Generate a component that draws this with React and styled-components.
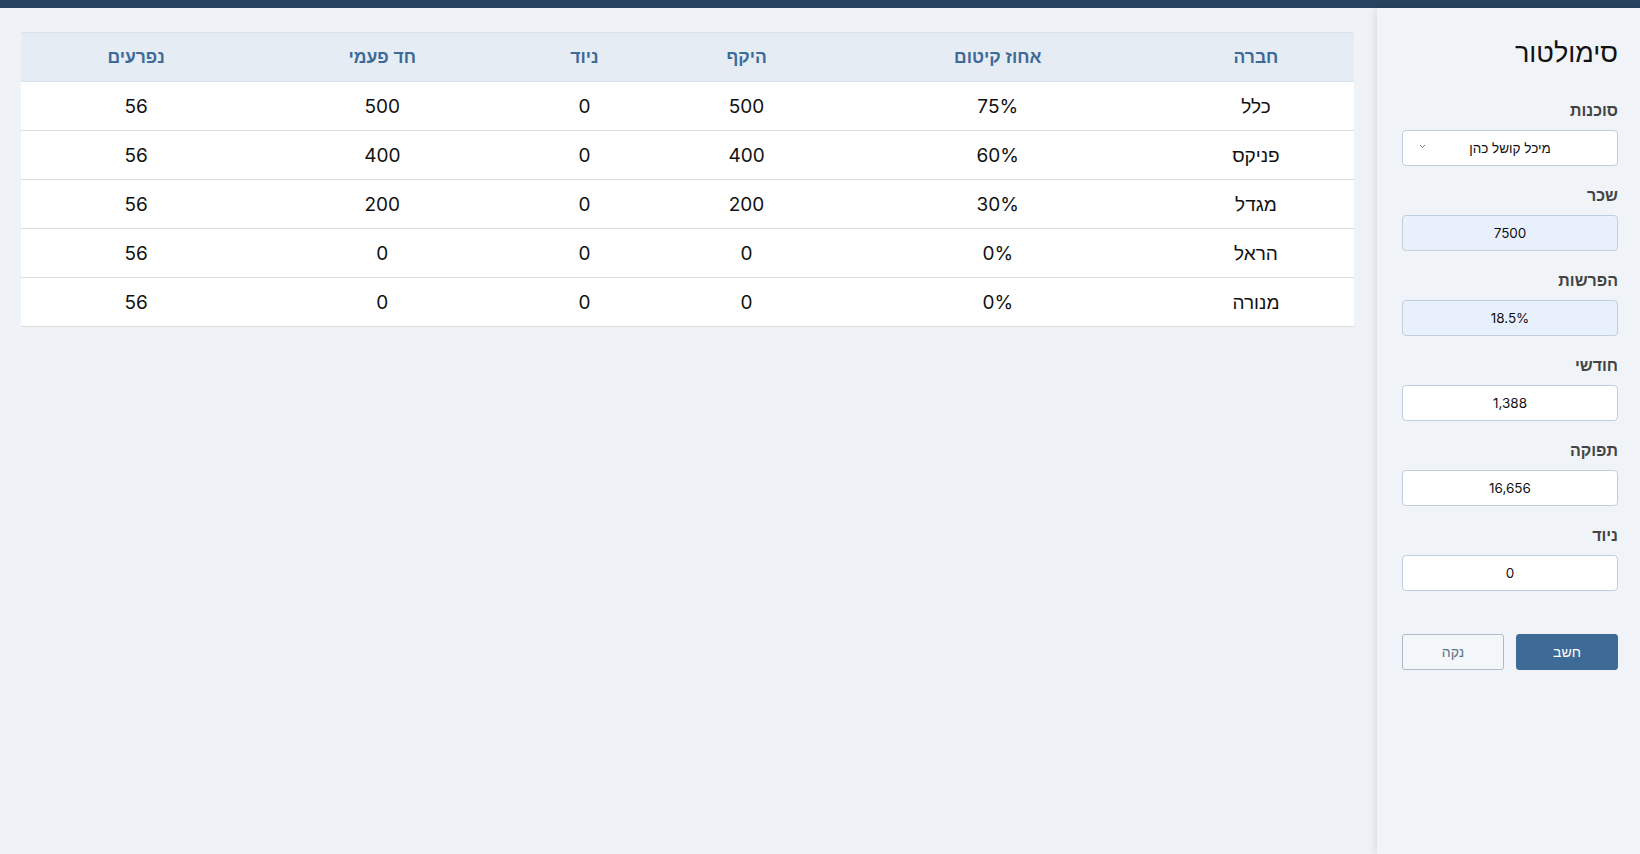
import React from 'react';
import styled, { createGlobalStyle } from 'styled-components';

const GlobalStyle = createGlobalStyle`
  html, body {
    margin: 0;
    padding: 0;
    background: #eff3f7;
    font-family: Inter, "Liberation Sans", Arial, sans-serif;
  }
  * { box-sizing: border-box; }
`;

const Page = styled.div`
  direction: rtl;
  min-height: 854px;
  display: flex;
  flex-direction: column;
  background: #eff3f7;
`;

const TopBar = styled.div`
  height: 8px;
  background: #27435f;
`;

const Body = styled.div`
  flex: 1;
  display: flex;
  flex-direction: row;
`;

const Sidebar = styled.aside`
  width: 263px;
  flex-shrink: 0;
  padding: 25px 22px 0 25px;
  background: #f0f4f8;
  box-shadow: -3px 0 7px rgba(0, 0, 0, 0.08);
  display: flex;
  flex-direction: column;
`;

const Title = styled.h1`
  margin: 0 0 28px;
  font-family: "Liberation Sans", Arial, sans-serif;
  font-size: 27px;
  font-weight: 400;
  line-height: 40px;
  color: #111;
`;

const Field = styled.div`
  display: flex;
  flex-direction: column;
  margin-bottom: 20px;
`;

const Label = styled.label`
  font-family: "Liberation Sans", Arial, sans-serif;
  font-size: 16px;
  font-weight: 700;
  color: #444;
  line-height: 20px;
  margin-bottom: 9px;
`;

const Input = styled.div`
  height: 36px;
  border: 1px solid #bfcfde;
  border-radius: 4px;
  background: ${p => (p.filled ? '#e8f0fd' : '#ffffff')};
  display: flex;
  align-items: center;
  justify-content: center;
  font-size: 13.5px;
  color: #111;
`;

const Select = styled(Input)`
  position: relative;
  font-family: "Liberation Sans", Arial, sans-serif;
  font-size: 13.5px;
`;

const Chevron = styled.span`
  position: absolute;
  left: 16px;
  top: 13px;
  display: flex;
`;

const Buttons = styled.div`
  display: flex;
  gap: 12px;
  margin-top: 23px;
`;

const Button = styled.button`
  flex: 1;
  height: 36px;
  border-radius: 3px;
  font-family: "Liberation Sans", Arial, sans-serif;
  font-size: 14px;
  cursor: pointer;
  border: 1px solid ${p => (p.primary ? '#3d6a96' : '#a9bbcc')};
  background: ${p => (p.primary ? '#3d6a96' : '#f4f7fa')};
  color: ${p => (p.primary ? '#ffffff' : '#5d7389')};
`;

const Main = styled.main`
  flex: 1;
  padding: 24px 23px 0 21px;
`;

const Table = styled.table`
  width: 100%;
  border-collapse: collapse;
  table-layout: fixed;
  background: #fff;
  border-top: 1px solid #dbe3ea;
`;

const Th = styled.th`
  height: 49px;
  background: #e5ecf3;
  color: #3d6a99;
  font-family: "Liberation Sans", Arial, sans-serif;
  font-size: 17.5px;
  font-weight: 700;
  text-align: center;
  border-bottom: 1px solid #dbe3ea;
`;

const Td = styled.td`
  height: 49px;
  text-align: center;
  font-size: 19px;
  color: #111;
  border-bottom: 1px solid #dcdcdc;
`;

const columns = [
  { title: 'חברה', width: 196 },
  { title: 'אחוז קיטום', width: 320 },
  { title: 'היקף', width: 182 },
  { title: 'ניוד', width: 142 },
  { title: 'חד פעמי', width: 262 },
  { title: 'נפרעים', width: 230 },
];

const rows = [
  ['כלל', '75%', '500', '0', '500', '56'],
  ['פניקס', '60%', '400', '0', '400', '56'],
  ['מגדל', '30%', '200', '0', '200', '56'],
  ['הראל', '0%', '0', '0', '0', '56'],
  ['מנורה', '0%', '0', '0', '0', '56'],
];

const fields = [
  { label: 'שכר', value: '7500', filled: true },
  { label: 'הפרשות', value: '18.5%', filled: true },
  { label: 'חודשי', value: '1,388' },
  { label: 'תפוקה', value: '16,656' },
  { label: 'ניוד', value: '0' },
];

export default function App() {
  return (
    <Page>
      <GlobalStyle />
      <TopBar />
      <Body>
        <Sidebar>
          <Title>סימולטור</Title>
          <Field>
            <Label>סוכנות</Label>
            <Select>
              מיכל קושל כהן
              <Chevron>
                <svg width="7" height="5" viewBox="0 0 7 5">
                  <path d="M1 1l2.5 2.5L6 1" fill="none" stroke="#777" strokeWidth="1" />
                </svg>
              </Chevron>
            </Select>
          </Field>
          {fields.map(f => (
            <Field key={f.label}>
              <Label>{f.label}</Label>
              <Input filled={f.filled}>{f.value}</Input>
            </Field>
          ))}
          <Buttons>
            <Button primary>חשב</Button>
            <Button>נקה</Button>
          </Buttons>
        </Sidebar>
        <Main>
          <Table>
            <colgroup>
              {columns.map(c => (
                <col key={c.title} style={{ width: c.width }} />
              ))}
            </colgroup>
            <thead>
              <tr>
                {columns.map(c => (
                  <Th key={c.title}>{c.title}</Th>
                ))}
              </tr>
            </thead>
            <tbody>
              {rows.map(r => (
                <tr key={r[0]}>
                  {r.map((cell, i) => (
                    <Td key={i}>{cell}</Td>
                  ))}
                </tr>
              ))}
            </tbody>
          </Table>
        </Main>
      </Body>
    </Page>
  );
}
